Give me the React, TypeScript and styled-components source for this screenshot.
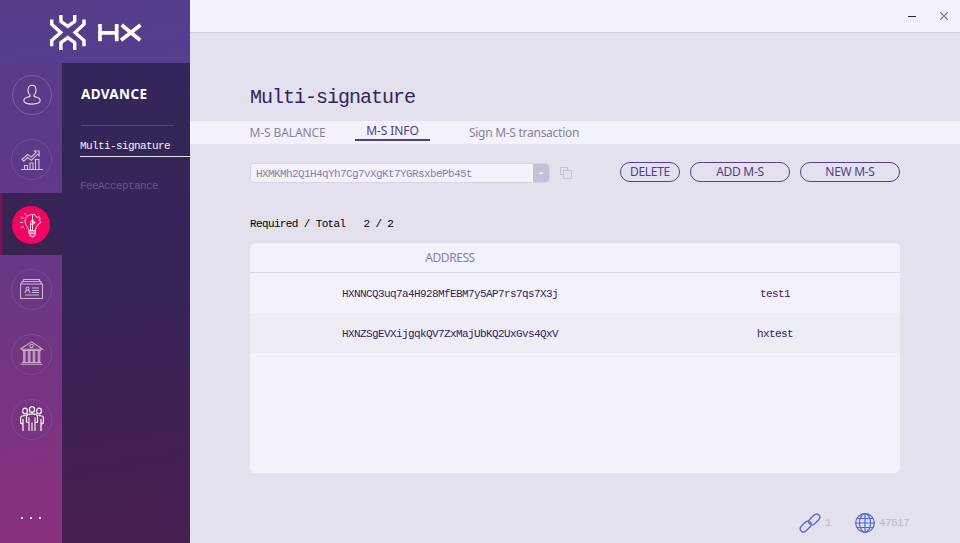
import React from "react";
import styled, { createGlobalStyle } from "styled-components";

const Global = createGlobalStyle`
  * { box-sizing: border-box; }
  body { margin: 0; overflow: hidden; }
  button { font: inherit; padding: 0; margin: 0; background: none; border: 0; }
`;

const sans = `"Noto Sans", "Open Sans", sans-serif`;
const mono = `"Liberation Mono", monospace`;

const Window = styled.div`
  display: grid;
  grid-template-columns: 190px 1fr;
  width: 960px;
  height: 543px;
  background: #e3e1ee;
  font-family: ${sans};
  font-size: 12px;
`;

const Sidebar = styled.aside`
  display: grid;
  grid-template: 63px 1fr / 62px 128px;
  background: linear-gradient(172deg, #563d89 0%, #5c3a88 27%, #6d3684 55%, #8d307d 100%);
`;

const Brand = styled.header`
  grid-column: 1 / 3;
  display: flex;
  padding: 14px 0 0 49px;
  background: linear-gradient(170deg, #563d89, #533f90);
`;

const Rail = styled.nav`
  display: flex;
  flex-direction: column;
  gap: 3px;
`;

const RailItem = styled.button<{ $active?: boolean }>`
  display: flex;
  align-items: center;
  justify-content: center;
  flex: none;
  width: 62px;
  height: 62px;
  background: ${(p) => (p.$active ? "linear-gradient(90deg, #8a1159 0, #3b2154 3px, #392456 100%)" : "none")};
`;

const Disc = styled.span<{ $active?: boolean; $line?: string; $small?: boolean }>`
  display: flex;
  align-items: center;
  justify-content: center;
  width: ${(p) => (p.$active ? 38 : p.$small ? 40 : 41)}px;
  height: ${(p) => (p.$active ? 38 : p.$small ? 40 : 41)}px;
  margin: ${(p) => (p.$active ? "1px 0 0" : "1px 0 0 1px")};
  border-radius: 50%;
  border: ${(p) => (p.$active ? "0" : `1px solid ${p.$line ?? "#794b94"}`)};
  background: ${(p) => (p.$active ? "#ef0660" : "none")};
`;

const More = styled.button`
  display: flex;
  gap: 7px;
  margin: 64px 0 0 21px;
`;

const Dot = styled.i`
  width: 2px;
  height: 2px;
  background: #f3e6f2;
`;

const Submenu = styled.nav`
  display: flex;
  flex-direction: column;
  padding-left: 18px;
  background: linear-gradient(170deg, #33265a 0%, #372459 50%, #402155 72%, #492052 100%);
`;

const SubTitle = styled.h2`
  width: 92px;
  height: 63px;
  margin: 0 0 0 1px;
  padding-top: 21px;
  border-bottom: 1px solid #51408a;
  color: #fff;
  font: 700 13.5px/20px ${sans};
  letter-spacing: 0.35px;
`;

const SubItem = styled.a<{ $active?: boolean }>`
  height: ${(p) => (p.$active ? "31px" : "40px")};
  padding-top: ${(p) => (p.$active ? "12px" : "21px")};
  border-bottom: 1px solid ${(p) => (p.$active ? "#e8e4ee" : "transparent")};
  color: ${(p) => (p.$active ? "#f4f1f6" : "#675489")};
  font: 11px/17px ${mono};
  letter-spacing: -0.6px;
`;

const Main = styled.main`
  display: flex;
  flex-direction: column;
  min-width: 0;
`;

const TitleBar = styled.header`
  display: flex;
  justify-content: flex-end;
  align-items: flex-start;
  gap: 24px;
  height: 33px;
  padding: 12px 12px 0 0;
  background: #f3f1fa;
  border-bottom: 1px solid #d3d0e3;
`;

const Heading = styled.h1`
  height: 88px;
  margin: 0;
  padding: 51px 0 0 60px;
  color: #33235f;
  font: 400 20px/28px ${mono};
  letter-spacing: -1px;
`;

const Tabs = styled.nav`
  display: flex;
  height: 23px;
  padding-left: 59px;
  background: #f3f1fa;
`;

const Tab = styled.button<{ $active?: boolean; $width: number; $gap: number; $track?: number }>`
  width: ${(p) => p.$width}px;
  height: ${(p) => (p.$active ? "20px" : "23px")};
  margin-right: ${(p) => p.$gap}px;
  border-bottom: ${(p) => (p.$active ? "2px solid #533c8b" : "0")};
  color: ${(p) => (p.$active ? "#533c8b" : "#8982a6")};
  line-height: ${(p) => (p.$active ? "20px" : "22px")};
  letter-spacing: ${(p) => p.$track ?? 0}px;
  white-space: nowrap;
`;

const Controls = styled.section`
  display: flex;
  padding: 18px 60px 0 60px;
  height: 68px;
`;

const Picker = styled.div`
  display: flex;
  width: 300px;
  height: 20px;
  margin-top: 1px;
  overflow: hidden;
  border: 1px solid #d8d4e6;
  border-radius: 4px;
  background: #f3f1fa;
`;

const PickerValue = styled.span`
  flex: 1;
  padding-left: 5px;
  color: #8b82a6;
  font: 11px/20px ${mono};
  letter-spacing: -0.6px;
`;

const PickerArrow = styled.button`
  display: flex;
  align-items: center;
  justify-content: center;
  width: 16px;
  background: #c5bfd9;
`;

const CopyButton = styled.button`
  display: flex;
  height: 12px;
  margin: 5px 0 0 10px;
`;

const Actions = styled.div`
  display: flex;
  gap: 10px;
  margin-left: auto;
`;

const Pill = styled.button<{ $width: number }>`
  width: ${(p) => p.$width}px;
  height: 20px;
  border: 1px solid #593f8e;
  border-radius: 10px;
  color: #533c8b;
  line-height: 18px;
  letter-spacing: -0.3px;
`;

const Required = styled.p`
  height: 31px;
  margin: 0;
  padding-left: 60px;
  color: #000;
  font: 11px/25px ${mono};
  letter-spacing: -0.63px;
  white-space: pre;
`;

const Table = styled.section`
  height: 230px;
  margin: 0 60px;
  overflow: hidden;
  border-radius: 5px;
  background: #f3f1fa;
`;

const Row = styled.div<{ $head?: boolean; $shade?: boolean }>`
  display: grid;
  grid-template-columns: 400px 250px;
  height: ${(p) => (p.$head ? "30px" : "40px")};
  background: ${(p) => (p.$shade ? "#eeecf5" : "transparent")};
  border-bottom: ${(p) => (p.$head ? "1px solid #dad7e8" : "0")};
  color: ${(p) => (p.$head ? "#8b82a6" : "#33235f")};
  font: ${(p) => (p.$head ? `12px/30px ${sans}` : `11px/42px ${mono}`)};
  letter-spacing: ${(p) => (p.$head ? "-0.45px" : "-0.6px")};
  text-align: center;
`;

const Status = styled.footer`
  display: flex;
  align-items: center;
  height: 24px;
  margin: 38px 0 0 609px;
  color: #bcb9d0;
  font: 11px/24px ${mono};
  letter-spacing: -0.6px;
`;

const StatusText = styled.span<{ $width: number }>`
  width: ${(p) => p.$width}px;
  padding-left: 4px;
`;

const Logo = () => (
  <svg width="96" height="38" viewBox="49 14 96 38" fill="none" stroke="#fff">
    <g strokeWidth="3.4">
      <path d="M60.900 15v6.500l6.900 5 6.900-5V15M60.900 50v-7.500l6.900-5 6.900 5V50" />
      <path d="M51.700 19.500v4.700l9 8.300-9 8v5.700M84 19.500v4.700l-9 8.300 9 8v5.700" />
    </g>
    <path strokeWidth="3.700" d="M100 24v17.300M100 32.800H118M116.700 24v17.300M121.700 25l18.500 15.300M140.500 25L121 40.300" />
  </svg>
);

const Person = () => (
  <svg width="20" height="22" viewBox="0 0 20 22" fill="none" stroke="#eee4f2" strokeWidth="1.100">
    <path d="M8 11.200C6.700 10.200 6 8.200 6 6c0-2.900 1.600-4.700 4-4.700S14 3.100 14 6c0 2.200-.7 4.200-2 5.200v.9c.3.500 1 .7 2 .9 2.600.6 4.200 1.800 4.200 3.600 0 2.200-3.200 3.500-8.200 3.500s-8.200-1.300-8.200-3.500c0-1.800 1.600-3 4.200-3.600 1-.2 1.700-.4 2-.9z" />
  </svg>
);

const Growth = () => (
  <svg width="22" height="22" viewBox="0 0 22 22" fill="none" stroke="#d3c0dc" strokeWidth="1.100">
    <path d="M0 20.500h22M3.500 20v-3.500h3V20M9 20v-6h3v6M14.500 20v-9.500H18V20M1 10.500l5.500-5 4 2.500 4.500-4.500L13.500 2h4.700v4.700L16.700 5.200l-6.200 6L6.500 8.500l-3.700 3.700z" />
  </svg>
);

const Idea = () => (
  <svg width="22" height="26" viewBox="0 0 22 26" fill="none" stroke="#fff" strokeOpacity=".85" strokeWidth="1">
    <path d="M9 18.500c0-3-4-4.500-4-9C5 5.500 8 2.500 12.500 2.500v16M12.500 2.500h2.200l.8 2 1.800.8 1.700-.6 1.200 2-1 1.600 1.300 1.200-.5 2-1.800.5-.7 2-1.500 1-.5 3.500M9 18.500h6.500v3H9zM10 22v2h5v-2M9 20h6.500M11 24l1.500 1.500L14 24M10.500 11.500v7M0 10.500h3M1 5l2.500 1.500M4.500 1l2 2.500M1 16l3-1.800" />
    <circle cx="12.500" cy="10.500" r="2" />
    <path d="M12.500 10.500h3" />
  </svg>
);

const Cards = () => (
  <svg width="24" height="22" viewBox="0 1 24 22" fill="none" stroke="#cdb3d3" strokeWidth="1.100">
    <path d="M3.500 3V1.500h16V3M2 5.500V3.500h19v2M.5 6h22v14.500H.5zM12 10h7M12 12.500h7M12 14.500h7M5 17h14" />
    <circle cx="7.500" cy="10.500" r="1.500" />
    <path d="M5 15c0-2 1-2.500 2.500-2.500S10 13 10 15" />
  </svg>
);

const Bank = () => (
  <svg width="24" height="24" viewBox="0 2 24 24" overflow="visible" fill="none" stroke="#cbb0ce" strokeWidth="1.100">
    <path d="M.5 8 11.500.8 22.500 8.300H.500M2 9.500h19M2 21.500h19M.5 23.300h22" />
    <circle cx="11.500" cy="5" r="1.700" />
    <path strokeWidth="2.700" opacity=".8" d="M4.300 10v11M9.200 10v11M14 10v11M19 10v11" />
  </svg>
);

const People = () => (
  <svg width="24" height="26" viewBox="0 1 24 26" overflow="visible" fill="none" stroke="#fff" strokeWidth="1.200">
    <ellipse cx="12" cy="3.500" rx="2.500" ry="2.900" />
    <ellipse cx="5" cy="5" rx="2.400" ry="2.800" />
    <ellipse cx="19" cy="5" rx="2.400" ry="2.800" />
    <path d="M3 25v-6.500L.6 17v-5c0-1.700 1.400-2.500 5-2.500M21 25v-6.500l2.400-1.500v-5c0-1.700-1.400-2.500-5-2.500M6.500 16v-5.500c0-2 2-2.700 5.500-2.700s5.500.7 5.500 2.700V16l-2 .8M6.500 16l2 .8M3 13v5M21 13v5" />
    <path opacity=".7" strokeWidth="1.500" d="M12 16.500V25M9 11.500V25M15 11.500V25" />
  </svg>
);

const Link = () => (
  <svg width="22" height="22" viewBox="0 0 22 22" fill="none" stroke="#5b70db" strokeWidth="1.500" strokeLinecap="round">
    <path d="M12.300 13c2.200.2 3-.8 4.200-2l3-3c1.500-1.600 1.600-3.700.3-5s-3.400-1.200-5 .3l-3.600 3.600c-1.700 1.700-1.900 3.300-.7 4.800" />
    <path d="M9.700 9c-2.200-.2-3 .8-4.200 2l-3 3c-1.500 1.600-1.600 3.700-.3 5s3.400 1.200 5-.3l3.600-3.600c1.700-1.700 1.900-3.300.7-4.800" />
  </svg>
);

const Globe = () => (
  <svg width="20" height="20" viewBox="0 0 20 20" fill="none" stroke="#5268da" strokeWidth="1.200">
    <circle cx="10" cy="10" r="9.300" />
    <ellipse cx="10" cy="10" rx="5.500" ry="9.300" />
    <path d="M10 .5v19M.5 10h19M2 5.500h16M2 14.500h16" />
  </svg>
);

const railIcons = [
  { icon: <Person />, line: "#805aa0", small: true },
  { icon: <Growth />, line: "#774b97" },
  { icon: <Idea />, active: true },
  { icon: <Cards />, line: "#7d4792" },
  { icon: <Bank />, line: "#81488f" },
  { icon: <People />, line: "#844790" },
];

const owners = [
  ["HXNNCQ3uq7a4H928MfEBM7y5AP7rs7qs7X3j", "test1"],
  ["HXNZSgEVXijgqkQV7ZxMajUbKQ2UxGvs4QxV", "hxtest"],
];

export default function App() {
  return (
    <>
      <Global />
      <Window>
        <Sidebar>
          <Brand><Logo /></Brand>
          <Rail>
            {railIcons.map((item, i) => (
              <RailItem key={i} $active={item.active}>
                <Disc $active={item.active} $line={item.line} $small={item.small}>{item.icon}</Disc>
              </RailItem>
            ))}
            <More><Dot /><Dot /><Dot /></More>
          </Rail>
          <Submenu>
            <SubTitle>ADVANCE</SubTitle>
            <SubItem $active>Multi-signature</SubItem>
            <SubItem>FeeAcceptance</SubItem>
          </Submenu>
        </Sidebar>
        <Main>
          <TitleBar>
            <svg width="8" height="8" stroke="#2d2360" strokeWidth="1"><path d="M0 4.500h8" /></svg>
            <svg width="8" height="8" stroke="#716b91" strokeWidth="1.100"><path d="M0 0l8 8M8 0L0 8" /></svg>
          </TitleBar>
          <Heading>Multi-signature</Heading>
          <Tabs>
            <Tab $width={77} $gap={29} $track={-0.1}>M-S BALANCE</Tab>
            <Tab $width={75} $gap={38} $active $track={-0.1}>M-S INFO</Tab>
            <Tab $width={112} $gap={0} $track={-0.27}>Sign M-S transaction</Tab>
          </Tabs>
          <Controls>
            <Picker>
              <PickerValue>HXMKMh2Q1H4qYh7Cg7vXgKt7YGRsxbePb45t</PickerValue>
              <PickerArrow>
                <svg width="6" height="3"><path d="M0 .5h6L4 2H2z" fill="#fff" /></svg>
              </PickerArrow>
            </Picker>
            <CopyButton>
              <svg width="12" height="12" fill="none" stroke="#c4c1d6"><path d="M3 7.500H.5v-7h7V3M3.500 3.500h8v8h-8z" /></svg>
            </CopyButton>
            <Actions>
              <Pill $width={60}>DELETE</Pill>
              <Pill $width={100}>ADD M-S</Pill>
              <Pill $width={100}>NEW M-S</Pill>
            </Actions>
          </Controls>
          <Required>{"Required / Total   2 / 2"}</Required>
          <Table>
            <Row $head><span>ADDRESS</span></Row>
            {owners.map(([address, name], i) => (
              <Row key={address} $shade={i % 2 === 1}><span>{address}</span><span>{name}</span></Row>
            ))}
          </Table>
          <Status>
            <Link /><StatusText $width={34}>1</StatusText>
            <Globe /><StatusText $width={50}>47517</StatusText>
          </Status>
        </Main>
      </Window>
    </>
  );
}
